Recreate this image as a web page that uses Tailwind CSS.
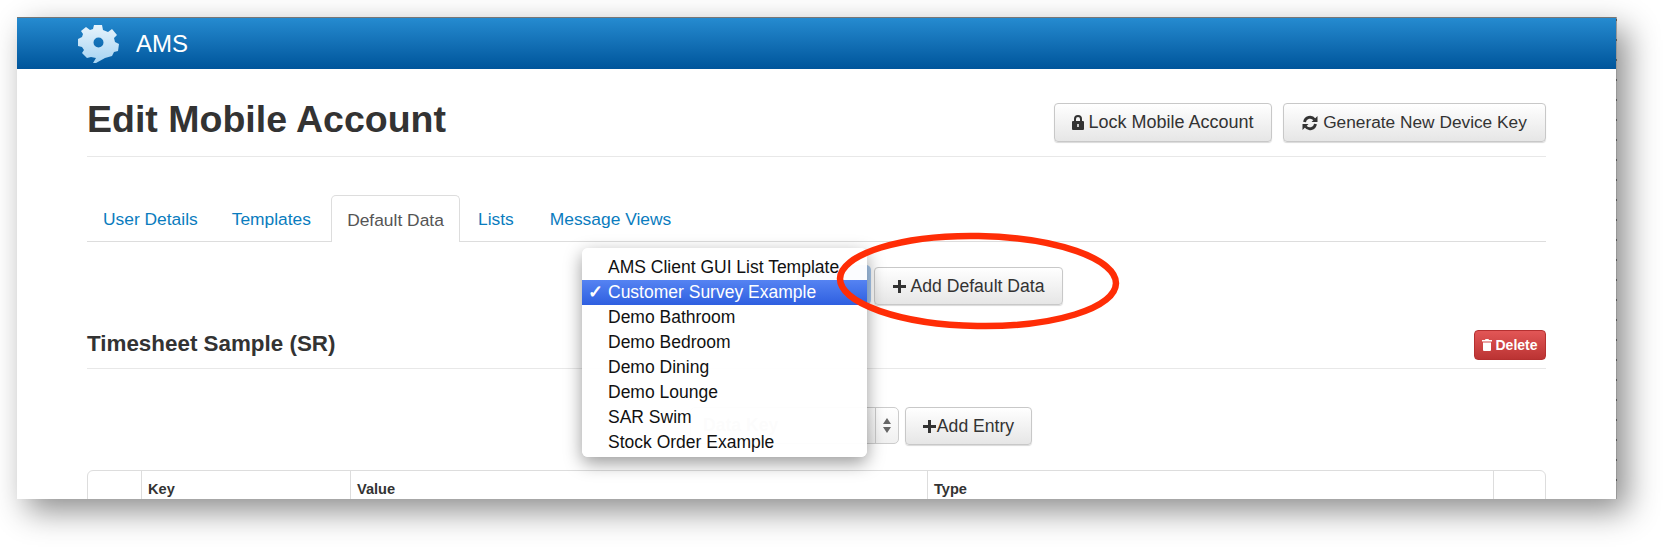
<!DOCTYPE html>
<html lang="en">
<head>
    <meta charset="UTF-8">
    <title>AMS - Edit Mobile Account</title>
    <script src="https://cdn.jsdelivr.net/npm/@tailwindcss/browser@4"></script>
</head>
<body class="bg-white font-['Liberation_Sans',Arial,sans-serif] text-[#333]">
    <div class="h-[547px] w-[1665px] overflow-hidden pl-[17px] pt-[17px]">
        <!-- Window -->
        <div class="relative h-[482px] w-[1600px] bg-white border-r border-[#999] shadow-[10px_12px_30px_rgba(0,0,0,0.45)]">
            <div class="h-full overflow-hidden">
                <!-- Navbar -->
                <div class="flex h-[52px] items-center gap-[17px] border-t border-[#777] bg-gradient-to-b from-[#258bd0] to-[#00559b] pl-[61px]">
                    <svg class="h-[40px] w-[41px]" viewBox="0 0 41 40">
                        <defs>
                            <linearGradient id="gear" x1="0" y1="0" x2="0" y2="1">
                                <stop offset="0" stop-color="#e8f4fc"/>
                                <stop offset="1" stop-color="#a5d3f2"/>
                            </linearGradient>
                        </defs>
                        <path fill="url(#gear)" fill-rule="evenodd" d="M16 1 L24 1 L25 6 L30 8 L34 5 L39 11 L36 14 L37 18 L41 20 L40 27 L36 28 L34 32 L27 34 L18 39 L15 39 L18 34 L13 33 L9 34 L4 29 L6 26 L4 23 L0 22 L0 15 L4 13 L5 10 L3 7 L8 3 L12 6 L15 5 Z M20.500 13.500 A5 5 0 1 0 20.500 23.500 A5 5 0 1 0 20.500 13.500 Z"/>
                    </svg>
                    <span class="text-[24px] text-white">AMS</span>
                </div>

                <div class="pl-[70px] pr-[70px]">
                    <!-- Page header -->
                    <div class="flex h-[88px] items-center justify-between border-b border-[#e8e8e8] pt-[20px]">
                        <h1 class="mb-[6px] text-[37.500px] font-bold">Edit Mobile Account</h1>
                        <div class="flex gap-[11px]">
                            <button class="flex h-[39px] w-[218px] items-center justify-center gap-[4px] rounded-[4px] border border-[#c8c8c8] bg-gradient-to-b from-white to-[#e6e6e6] text-[18px] shadow-[0_1px_1px_rgba(0,0,0,0.15)]">
                                <svg class="h-[15px] w-[12px]" viewBox="0 0 12 15"><path fill="#333" fill-rule="evenodd" d="M2 6V4a4 4 0 0 1 8 0v2h1a1 1 0 0 1 1 1v7a1 1 0 0 1-1 1H1a1 1 0 0 1-1-1V7a1 1 0 0 1 1-1Zm2 0h4V4a2 2 0 0 0-4 0Zm1.200 3v3h1.600V9Z"/></svg>
                                Lock Mobile Account
                            </button>
                            <button class="flex h-[39px] w-[263px] items-center justify-center gap-[5px] rounded-[4px] border border-[#c8c8c8] bg-gradient-to-b from-white to-[#e6e6e6] text-[17.300px] shadow-[0_1px_1px_rgba(0,0,0,0.15)]">
                                <svg class="h-[16px] w-[16px]" viewBox="0 0 16 16"><path fill="none" stroke="#333" stroke-width="2.800" d="M2.500 7A5.600 5.600 0 0 1 12.500 4.500M13.500 9A5.600 5.600 0 0 1 3.500 11.500"/><path fill="#333" d="M15.500 1v6h-6ZM.5 15V9h6Z"/></svg>
                                Generate New Device Key
                            </button>
                        </div>
                    </div>

                    <!-- Tabs -->
                    <div class="mt-[38px] flex h-[47px] border-b border-[#ddd] pl-[16px] text-[17.400px] text-[#0a7cbe]">
                        <a class="mr-[34px] flex items-center pt-[3px]">User Details</a>
                        <a class="mr-[20px] flex items-center pt-[3px]">Templates</a>
                        <a class="z-10 -mb-px flex w-[129px] items-center justify-center rounded-t-[5px] border border-b-0 border-[#ddd] bg-white pt-[3px] text-[#555]">Default Data</a>
                        <a class="ml-[18px] mr-[36px] flex items-center pt-[3px]">Lists</a>
                        <a class="flex items-center pt-[3px]">Message Views</a>
                    </div>

                    <!-- Add default data row -->
                    <div class="flex h-[63px] items-end pl-[787px]">
                        <button class="flex h-[38px] w-[189px] items-center justify-center gap-[5px] rounded-[4px] border border-[#c8c8c8] bg-gradient-to-b from-white to-[#e6e6e6] text-[17.600px] shadow-[0_1px_1px_rgba(0,0,0,0.15)]">
                            <svg class="h-[13px] w-[13px]" viewBox="0 0 13 13"><path fill="#333" d="M5 0h3v5h5v3H8v5H5V8H0V5h5Z"/></svg>
                            Add Default Data
                        </button>
                    </div>

                    <!-- Section heading -->
                    <div class="mt-[25px] flex h-[39px] items-start justify-between border-b border-[#e8e8e8]">
                        <h2 class="text-[22.400px] leading-[28px] font-bold">Timesheet Sample (SR)</h2>
                        <button class="flex h-[30px] w-[72px] items-center justify-center gap-[3px] rounded-[4px] border border-[#b53030] bg-gradient-to-b from-[#e25656] to-[#bb3333] text-[14px] font-bold text-white">
                            <svg class="h-[12px] w-[10px]" viewBox="0 0 10 12"><path fill="#fff" d="M3.500 0h3l.5 1h3v1.500H0V1h3ZM1 3.500h8V11a1 1 0 0 1-1 1H2a1 1 0 0 1-1-1Z"/></svg>
                            Delete
                        </button>
                    </div>

                    <!-- Entry row -->
                    <div class="mt-[38px] flex gap-[6px] pl-[603px]">
                        <div class="flex h-[37px] w-[209px] items-center justify-between rounded-[5px] border border-[#ccc] bg-gradient-to-b from-white to-[#f0f0f0] pl-[12px]">
                            <span class="text-[17.600px] font-bold text-[#bbb]">Data Key</span>
                            <div class="flex h-full w-[23px] items-center justify-center border-l border-[#ccc]">
                                <svg class="h-[15px] w-[8px]" viewBox="0 0 8 15"><path fill="#666" d="M4 0l4 6H0ZM4 15L0 9h8Z"/></svg>
                            </div>
                        </div>
                        <button class="flex h-[38px] w-[127px] items-center justify-center gap-[1px] rounded-[4px] border border-[#c8c8c8] bg-gradient-to-b from-white to-[#e6e6e6] text-[17.600px] shadow-[0_1px_1px_rgba(0,0,0,0.15)]">
                            <svg class="h-[13px] w-[13px]" viewBox="0 0 13 13"><path fill="#333" d="M5 0h3v5h5v3H8v5H5V8H0V5h5Z"/></svg>
                            Add Entry
                        </button>
                    </div>

                    <!-- Table -->
                    <div class="mt-[25px] grid h-[60px] grid-cols-[53px_209px_577px_566px_1fr] rounded-t-[6px] border border-[#ddd] text-[14.600px] font-bold">
                        <div></div>
                        <div class="border-l border-[#ddd] pl-[6px] pt-[8px]">Key</div>
                        <div class="border-l border-[#ddd] pl-[6px] pt-[8px]">Value</div>
                        <div class="border-l border-[#ddd] pl-[6px] pt-[8px]">Type</div>
                        <div class="border-l border-[#ddd]"></div>
                    </div>
                </div>
            </div>

            <!-- Ticks on the window edge -->
            <div class="absolute bottom-0 right-[-1px] top-[2px] w-px bg-[repeating-linear-gradient(to_bottom,#555_0,#555_2px,transparent_2px,transparent_20px)]"></div>

            <!-- Focus ring of the select under the menu -->
            <div class="absolute left-[780px] top-[248px] h-[40px] w-[74px] rounded-[5px] bg-[#a9c9ee]"></div>

            <!-- Open select menu -->
            <div class="absolute left-[565px] top-[231px] h-[209px] w-[285px] rounded-[6px] bg-white/95 py-[7px] text-[17.500px] leading-[25px] text-[#111] shadow-[0_6px_18px_rgba(0,0,0,0.4)]">
                <div class="pl-[26px]">AMS Client GUI List Template</div>
                <div class="relative bg-gradient-to-b from-[#5583f2] to-[#2f5fe0] pl-[26px] text-white"><span class="absolute left-[6px] font-bold">✓</span>Customer Survey Example</div>
                <div class="pl-[26px]">Demo Bathroom</div>
                <div class="pl-[26px]">Demo Bedroom</div>
                <div class="pl-[26px]">Demo Dining</div>
                <div class="pl-[26px]">Demo Lounge</div>
                <div class="pl-[26px]">SAR Swim</div>
                <div class="pl-[26px]">Stock Order Example</div>
            </div>

            <!-- Callout ellipse -->
            <svg class="absolute left-[815px] top-[212px] h-[104px] w-[295px]" viewBox="0 0 295 104">
                <ellipse cx="146" cy="52" rx="138" ry="45" fill="none" stroke="#ff2d06" stroke-width="6.500" transform="rotate(1 146 52)"/>
            </svg>
        </div>
    </div>
</body>
</html>
